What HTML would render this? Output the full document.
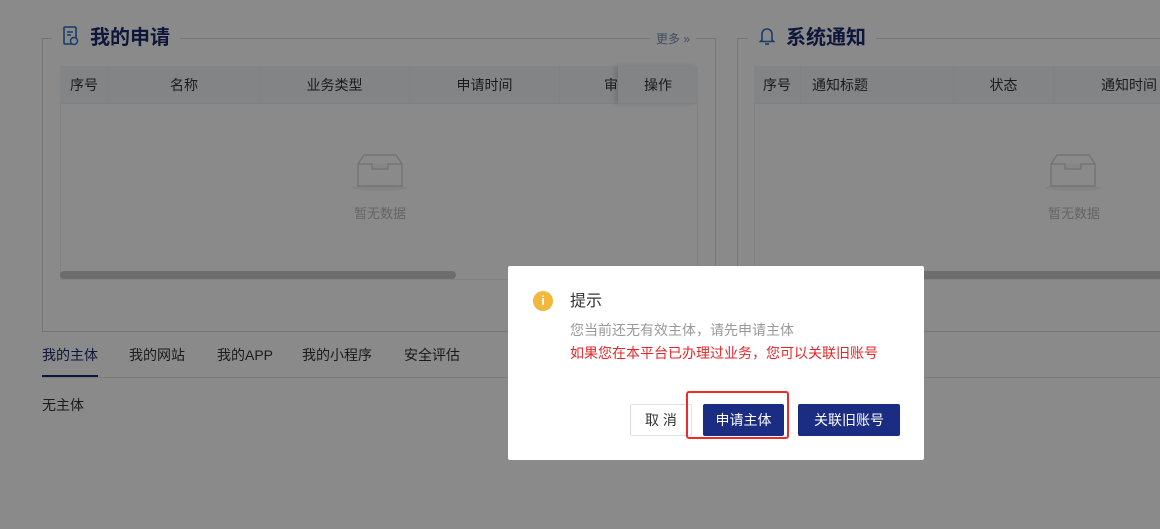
<!DOCTYPE html>
<html><head><meta charset="utf-8"><style>
*{margin:0;padding:0;box-sizing:border-box}
body{width:1160px;height:529px;overflow:hidden;background:#fff;font-family:"Liberation Sans","Noto Sans CJK SC",sans-serif;position:relative;font-size:14px;color:#333}
.a{position:absolute}
.box{position:absolute;border:1px solid #d8d8d8}
.title{position:absolute;background:#fff;font-size:20px;font-weight:bold;color:#1b2a6b;padding:0 10px;line-height:26px}
.th{position:absolute;top:66px;height:38px;line-height:38px;background:#f3f4f7;border-bottom:1px solid #ebeef5;font-size:14px;color:#333;text-align:center}
.tbl{position:absolute;border:1px solid #ebeef5}
.empty{position:absolute;color:#bbb;font-size:13px;text-align:center;width:100px}
.ov{position:absolute;left:0;top:0;width:1160px;height:529px;background:rgba(0,0,0,0.46)}
.btn{position:absolute;height:32px;line-height:30px;text-align:center;font-size:14px;border-radius:2px}
</style></head><body>
<div class="box" style="left:42px;top:38px;width:674px;height:294px"></div>
<div class="title" style="left:52px;top:25px"><svg width="18" height="20" viewBox="0 0 18 20" style="vertical-align:-2px;margin-right:10px"><rect x="2" y="1" width="12" height="17" rx="1" fill="none" stroke="#2a6fc0" stroke-width="1.6"/><line x1="5" y1="6" x2="11" y2="6" stroke="#2a6fc0" stroke-width="1.5"/><line x1="5" y1="9" x2="9" y2="9" stroke="#2a6fc0" stroke-width="1.5"/><circle cx="12" cy="15" r="3.5" fill="#fff" stroke="#2a6fc0" stroke-width="1.4"/></svg>我的申请</div>
<div class="a" style="left:650px;top:30px;background:#fff;padding:0 6px;font-size:12px;color:#7b8fb0">更多 »</div>
<div class="tbl" style="left:60px;top:66px;width:638px;height:214px"></div>
<div class="th" style="left:60px;width:48px">序号</div>
<div class="th" style="left:108px;width:151px;border-left:1px solid #ebeef5">名称</div>
<div class="th" style="left:259px;width:150px;border-left:1px solid #ebeef5">业务类型</div>
<div class="th" style="left:409px;width:150px;border-left:1px solid #ebeef5">申请时间</div>
<div class="th" style="left:559px;width:59px;border-left:1px solid #ebeef5;text-align:right;overflow:hidden">审</div>
<div class="th" style="left:618px;width:80px;box-shadow:-3px 0 4px rgba(0,0,0,0.12)">操作</div>
<svg class="a" style="left:350px;top:152px" width="60" height="40" viewBox="0 0 60 40"><ellipse cx="30" cy="36" rx="28" ry="3" fill="#f2f2f2"/><path d="M8 12 L14 3 H46 L52 12 V34 H8 Z" fill="none" stroke="#d6d6d6" stroke-width="1.5"/><path d="M8 12 H22 V17 H38 V12 H52" fill="#f8f8f8" stroke="#d6d6d6" stroke-width="1.5"/></svg>
<div class="empty" style="left:330px;top:203px">暂无数据</div>
<div class="a" style="left:60px;top:271px;width:396px;height:8px;background:#c9c9c9;border-radius:4px"></div>
<div class="box" style="left:737px;top:38px;width:440px;height:294px"></div>
<div class="title" style="left:748px;top:25px"><svg width="18" height="20" viewBox="0 0 18 20" style="vertical-align:-2px;margin-right:10px"><path d="M4 14 V8 a5 5 0 0 1 10 0 V14 L15.5 15.5 H2.5 Z" fill="none" stroke="#2a6fc0" stroke-width="1.6"/><path d="M7 18 H11" stroke="#2a6fc0" stroke-width="1.6"/></svg>系统通知</div>
<div class="tbl" style="left:754px;top:66px;width:420px;height:214px"></div>
<div class="th" style="left:754px;width:46px">序号</div>
<div class="th" style="left:800px;width:153px;border-left:1px solid #ebeef5;text-align:left;padding-left:11px">通知标题</div>
<div class="th" style="left:953px;width:100px;border-left:1px solid #ebeef5">状态</div>
<div class="th" style="left:1053px;width:130px;border-left:1px solid #ebeef5;text-align:left;padding-left:47px">通知时间</div>
<svg class="a" style="left:1043px;top:152px" width="60" height="40" viewBox="0 0 60 40"><ellipse cx="30" cy="36" rx="28" ry="3" fill="#f2f2f2"/><path d="M8 12 L14 3 H46 L52 12 V34 H8 Z" fill="none" stroke="#d6d6d6" stroke-width="1.5"/><path d="M8 12 H22 V17 H38 V12 H52" fill="#f8f8f8" stroke="#d6d6d6" stroke-width="1.5"/></svg>
<div class="empty" style="left:1024px;top:203px">暂无数据</div>
<div class="a" style="left:754px;top:271px;width:406px;height:8px;background:#c9c9c9"></div>
<div class="a" style="left:42px;top:377px;width:1118px;height:1px;background:#e6e6e6"></div>
<div class="a" style="left:42px;top:346px;color:#1b2a6b;line-height:18px">我的主体</div>
<div class="a" style="left:42px;top:375px;width:56px;height:2px;background:#1b2a6b"></div>
<div class="a" style="left:129px;top:346px;line-height:18px">我的网站</div>
<div class="a" style="left:217px;top:346px;line-height:18px">我的APP</div>
<div class="a" style="left:302px;top:346px;line-height:18px">我的小程序</div>
<div class="a" style="left:404px;top:346px;line-height:18px">安全评估</div>
<div class="a" style="left:42px;top:396px;line-height:18px">无主体</div>
<div class="ov"></div>
<div class="a" style="left:508px;top:266px;width:416px;height:194px;background:#fff;border-radius:2px"></div>
<div class="a" style="left:533px;top:291px;width:20px;height:20px;border-radius:50%;background:#f0b83c;color:#fff;font-size:13px;line-height:20px;text-align:center;font-weight:bold">i</div>
<div class="a" style="left:570px;top:291px;font-size:16px;line-height:22px;color:#333">提示</div>
<div class="a" style="left:570px;top:321px;font-size:14px;line-height:18px;color:#999">您当前还无有效主体，请先申请主体</div>
<div class="a" style="left:570px;top:344px;font-size:14px;line-height:18px;color:#e4262a">如果您在本平台已办理过业务，您可以关联旧账号</div>
<div class="btn" style="left:630px;top:404px;width:62px;border:1px solid #dcdfe6;color:#333;background:#fff">取 消</div>
<div class="btn" style="left:703px;top:404px;width:81px;background:#1b2d82;color:#fff;line-height:32px">申请主体</div>
<div class="btn" style="left:798px;top:404px;width:102px;background:#1b2d82;color:#fff;line-height:32px">关联旧账号</div>
<div class="a" style="left:686px;top:391px;width:103px;height:48px;border:2px solid #ee2a2a;border-radius:3px"></div>
</body></html>
